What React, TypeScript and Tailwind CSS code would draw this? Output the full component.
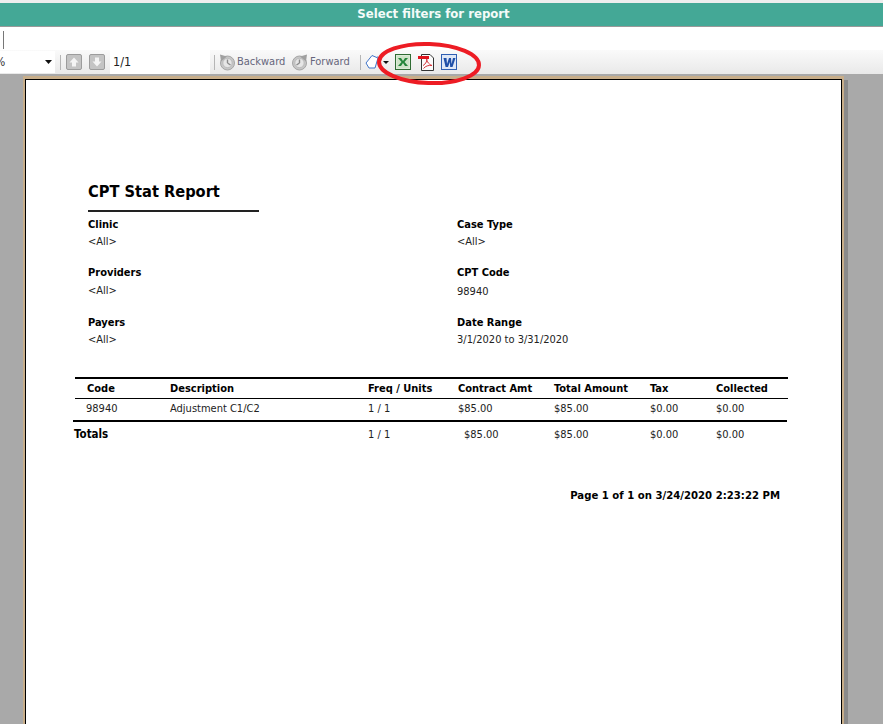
import React from "react";

const font = { fontFamily: '"DejaVu Sans Condensed", "DejaVu Sans", sans-serif', fontStretch: "condensed" };

function ClockIcon({ flip }: { flip?: boolean }) {
  return (
    <svg width="16" height="17" viewBox="0 0 16 17" style={flip ? { transform: "scaleX(-1)" } : undefined}>
      <circle cx="8.5" cy="9" r="7" fill="#c6c6c6" stroke="#a6a6a6" />
      <circle cx="8.5" cy="9" r="4.6" fill="#e6e6e6" stroke="#b5b5b5" strokeWidth="0.7" />
      <path d="M8.5 9 L8.5 5.5 M8.5 9 L11.5 11" stroke="#8a8a8a" strokeWidth="1.4" fill="none" />
      <path d="M1 0.5 L8 2.5 L2 7.5 Z" fill="#a0a0a0" />
    </svg>
  );
}

function ArrowButton({ down }: { down?: boolean }) {
  return (
    <div className="flex h-4 w-4 items-center justify-center rounded-[2px] border border-[#9c9c9c] bg-[#c4c4c4]">
      <svg width="10" height="10" viewBox="0 0 10 10">
        <path d={down ? "M3 0.5H7V4.5H9.5L5 9.5L0.5 4.5H3Z" : "M3 9.5H7V5.5H9.5L5 0.5L0.5 5.5H3Z"} fill="#f4f4f4" />
      </svg>
    </div>
  );
}

function Sep() {
  return <div className="h-[15px] w-px bg-[#b5b5b5]" />;
}

function Toolbar() {
  return (
    <div className="relative flex h-6 items-center bg-gradient-to-b from-[#fafafa] to-[#e9e9e9] text-[11px] text-[#66667c]">
      <div className="flex h-[22px] w-[55px] items-center justify-between bg-white pr-[2px]">
        <span className="-ml-[5px] text-[12px] text-[#333]">%</span>
        <svg width="7" height="4" viewBox="0 0 7 4" className="mr-[1px]">
          <path d="M0 0H7L3.5 4Z" fill="#111" />
        </svg>
      </div>
      <div className="ml-[5px]"><Sep /></div>
      <div className="ml-[5px]"><ArrowButton /></div>
      <div className="ml-[7px]"><ArrowButton down /></div>
      <div className="ml-[5px] flex h-[24px] w-[100px] items-center bg-white pl-[3px] text-[12.5px] text-[#222]">1/1</div>
      <div className="ml-[4px]"><Sep /></div>
      <div className="ml-[4px]"><ClockIcon /></div>
      <span className="ml-[2px] w-[48px] whitespace-nowrap">Backward</span>
      <div className="ml-[7px]"><ClockIcon flip /></div>
      <span className="ml-[2px] w-[42px] whitespace-nowrap">Forward</span>
      <div className="ml-[8px]"><Sep /></div>
      <svg width="16" height="16" viewBox="0 0 16 16" className="ml-[4px]">
        <path d="M1 9 L7 1.5 L13 4 L10 14 L4 14 Z" fill="#fff" stroke="#3f74c9" strokeWidth="1" />
        <path d="M12 2 L15.5 4 L13 8 Z" fill="#7f9fd6" />
      </svg>
      <svg width="6" height="3" viewBox="0 0 6 3" className="ml-[2px]">
        <path d="M0 0H6L3 3Z" fill="#111" />
      </svg>
      <svg width="16" height="16" viewBox="0 0 16 16" className="ml-[6px]">
        <rect x="0.5" y="0.5" width="15" height="15" fill="#dcebd8" stroke="#2f6b33" />
        <rect x="2" y="2" width="12" height="12" fill="#cfe3c8" />
        <path d="M3 4H6L8 7L10 4H13L9.5 8L13 12H10L8 9L6 12H3L6.5 8Z" fill="#23853a" />
      </svg>
      <svg width="17" height="17" viewBox="0 0 17 17" className="ml-[7px]">
        <path d="M3.5 0.5H12L15.5 4V16.5H3.5Z" fill="#fbfbfb" stroke="#333" />
        <path d="M5 11.5C8 10 9.5 6 8.7 4C8 6 10 10 14 11.5C10.5 11 7.5 12 5.5 14.5" fill="none" stroke="#d8333a" strokeWidth="1" />
        <rect x="0" y="2" width="11" height="3" fill="#e0141e" />
      </svg>
      <svg width="16" height="16" viewBox="0 0 16 16" className="ml-[6px]">
        <rect x="0.5" y="0.5" width="15" height="15" fill="#dfe8f7" stroke="#2f5fb3" />
        <path d="M2.5 4H5.5L6 10L8 4H10L10.5 10L12 4H14.5L11.5 13H9.2L8.8 8L7 13H4.6Z" fill="#1f4fa8" />
      </svg>
    </div>
  );
}

function Filter({ label, value, gap, height }: { label: string; value: string; gap: string; height: string }) {
  return (
    <div className={height}>
      <div className="text-[11px] leading-[14px] font-bold text-black">{label}</div>
      <div className={`text-[11px] leading-[14px] text-[#222] ${gap}`}>{value}</div>
    </div>
  );
}

const cols = "grid grid-cols-[83px_198px_90px_96px_96px_66px_72px]";
const header = ["Code", "Description", "Freq / Units", "Contract Amt", "Total Amount", "Tax", "Collected"];
const row = ["98940", "Adjustment C1/C2", "1 / 1", "$85.00", "$85.00", "$0.00", "$0.00"];

export default function App() {
  return (
    <div className="relative h-[724px] w-[883px] overflow-hidden bg-white" style={font}>
      <div className="h-[3px] bg-[#eeeeee]" />
      <div className="flex h-[24px] items-center justify-center border-b border-[#999] bg-[#44a896] pr-[16px] pb-[1px] text-[13px] font-bold text-[#f4fbf9]">
        Select filters for report
      </div>
      <div className="h-[23px] pt-[4px]">
        <div className="ml-[3px] h-[18px] w-px bg-[#777]" />
      </div>
      <Toolbar />
      <div className="h-[650px] bg-[#a9a9a9] pl-[23px] pt-[2px]">
        <div className="h-[700px] w-[821px] border-x-2 border-t-[3px] border-[#c8ae8a] shadow-[4px_4px_0_#8a8a8a]">
          <div className="h-full border border-black bg-white pt-[101px] pl-[62px]">
            <h1 className="text-[16.25px] leading-[22px] font-bold text-black">CPT Stat Report</h1>
            <div className="mt-[7px] h-[2px] w-[171px] bg-[#222]" />
            <div className="mt-[6px] grid grid-cols-[369px_1fr]">
              <div>
                <Filter height="h-[48px]" label="Clinic" value="<All>" gap="mt-[3px]" />
                <Filter height="h-[50px]" label="Providers" value="<All>" gap="mt-[4px]" />
                <Filter height="h-[49.5px]" label="Payers" value="<All>" gap="mt-[3px]" />
              </div>
              <div>
                <Filter height="h-[48px]" label="Case Type" value="<All>" gap="mt-[3px]" />
                <Filter height="h-[50px]" label="CPT Code" value="98940" gap="mt-[5px]" />
                <Filter height="h-[49.5px]" label="Date Range" value="3/1/2020 to 3/31/2020" gap="mt-[3px]" />
              </div>
            </div>
            <div className="-ml-[13px] mt-[11px] w-[713px] text-[11px] text-[#222]">
              <div className={`${cols} h-[22px] items-center border-t-2 border-b border-black pt-[2px] pl-[12px] font-bold text-black`}>
                {header.map((h) => (
                  <div key={h} className="text-[11px] whitespace-nowrap">{h}</div>
                ))}
              </div>
              <div className={`${cols} h-[21px] items-center pl-[11px]`}>
                {row.map((c, i) => (
                  <div key={i} className={`whitespace-nowrap ${i === 0 ? "" : "pl-[1px]"}`}>{c}</div>
                ))}
              </div>
              <div className="-ml-[2px] h-[2px] w-[714px] bg-black" />
              <div className={`${cols} -ml-[1px] h-[27px] items-center`}>
                <div className="col-span-2 text-[11.5px] font-bold text-black">Totals</div>
                <div className="pl-[13px]">1 / 1</div>
                <div className="pl-[19px]">$85.00</div>
                <div className="pl-[13px]">$85.00</div>
                <div className="pl-[13px]">$0.00</div>
                <div className="pl-[13px]">$0.00</div>
              </div>
            </div>
            <div className="mt-[39px] w-[692px] text-right text-[11.25px] font-bold text-black">
              Page 1 of 1 on 3/24/2020 2:23:22 PM
            </div>
          </div>
        </div>
      </div>
      <svg className="absolute left-[375px] top-[40px]" width="108" height="48" viewBox="0 0 108 48">
        <ellipse cx="54" cy="23.5" rx="50" ry="19.5" fill="none" stroke="#ed1c24" strokeWidth="4" transform="rotate(2 54 23.5)" />
      </svg>
    </div>
  );
}
